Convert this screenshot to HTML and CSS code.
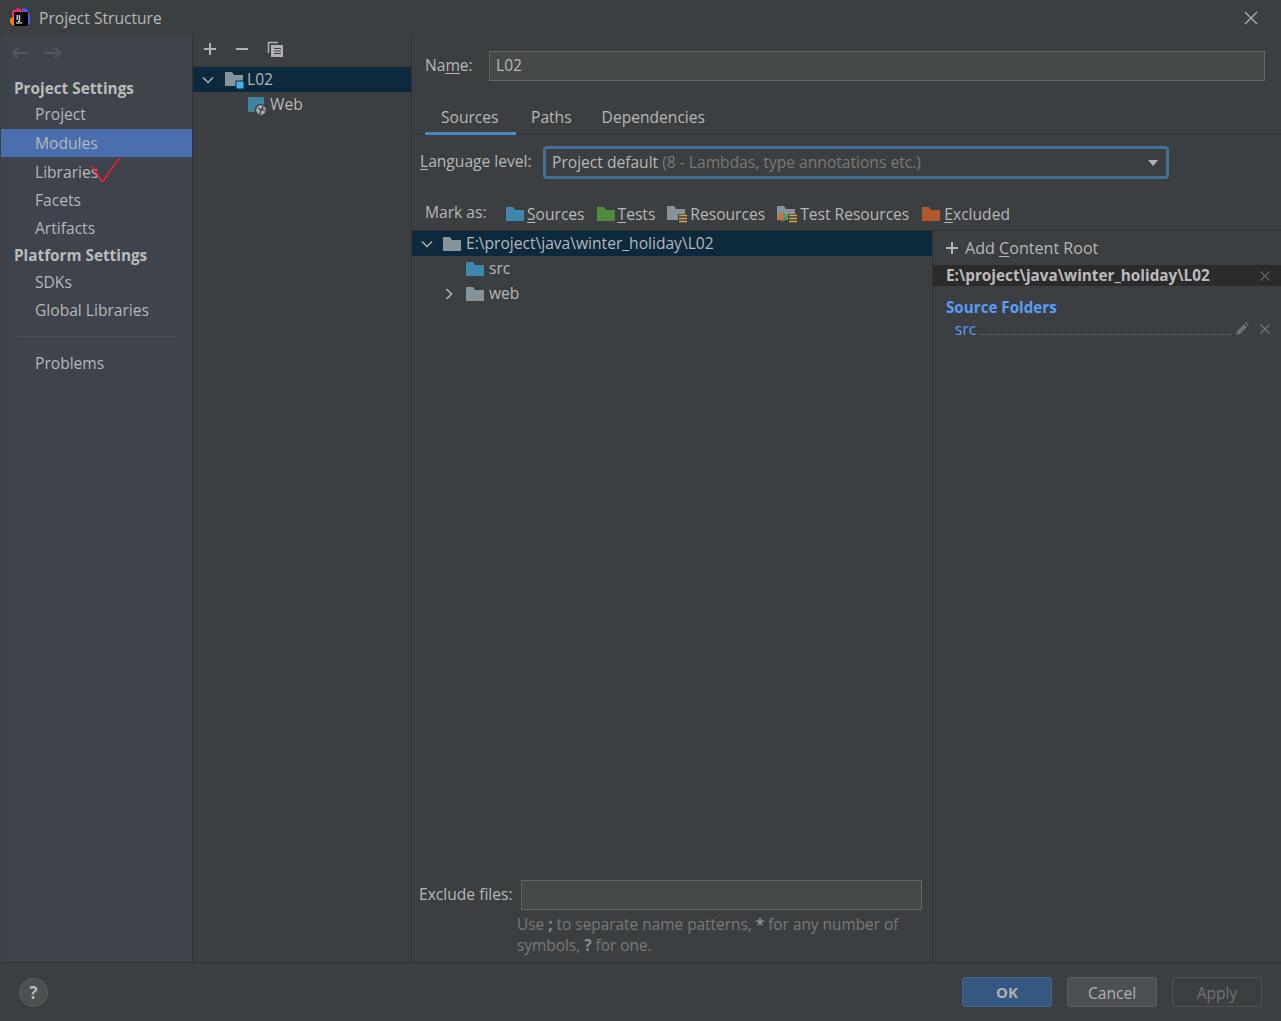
FILE: index.html
```html
<!DOCTYPE html>
<html lang="en">

<head>
  <title>Project Structure</title>
  <meta charset="UTF-8">
  <link rel="stylesheet" href="styles.css">
</head>

<body>

<div class="window">
  <div class="titlebar">
    <svg class="app-logo" width="22" height="22" viewBox="0 0 22 22">
      <path d="M3 4 L10 1 L14 5 L5 5 L5 11 L3 9 Z" fill="#f5296b"/>
      <path d="M13 1 L18 2 L21 8 L21 16 L17 20 L19 16 L19 5 L13 5 Z" fill="#3f5fe0"/>
      <path d="M1 12 L5 9 L5 19 L3 18 L1 15 Z" fill="#f97a12"/>
      <rect x="5" y="5" width="14" height="14" fill="#000"/>
      <text x="7" y="12.500" class="logo-text">IJ</text>
      <rect x="7" y="15.500" width="6" height="1" fill="#fff"/>
    </svg>
    <span class="title">Project Structure</span>
    <svg class="close" width="14" height="14" viewBox="0 0 14 14"><path d="M1 1 L13 13 M13 1 L1 13" stroke="#afb1b3" stroke-width="1.2"/></svg>
  </div>

  <div class="main">
    <div class="sidebar">
      <div class="nav-arrows">
        <svg width="18" height="14" viewBox="0 0 18 14"><path d="M17 7 H2 M7 2 L2 7 L7 12" fill="none" stroke="#55585a" stroke-width="2"/></svg>
        <svg width="18" height="14" viewBox="0 0 18 14"><path d="M1 7 H16 M11 2 L16 7 L11 12" fill="none" stroke="#55585a" stroke-width="2"/></svg>
      </div>
      <div class="heading first">Project Settings</div>
      <div class="item">Project</div>
      <div class="item active">Modules</div>
      <div class="item checked">Libraries
        <svg class="check" width="32" height="28" viewBox="0 0 32 28"><path d="M1 9 C4 13 7 19 10 23 C11 25 12 25 13 23 C17 16 23 8 29 1" fill="none" stroke="#f01f2a" stroke-width="1.600"/></svg>
      </div>
      <div class="item">Facets</div>
      <div class="item">Artifacts</div>
      <div class="heading">Platform Settings</div>
      <div class="item">SDKs</div>
      <div class="item">Global Libraries</div>
      <div class="side-sep"></div>
      <div class="item">Problems</div>
    </div>

    <div class="modules">
      <div class="mod-toolbar">
        <svg width="14" height="14" viewBox="0 0 14 14"><path d="M7 1 V13 M1 7 H13" stroke="#afb1b3" stroke-width="2"/></svg>
        <svg width="14" height="14" viewBox="0 0 14 14"><path d="M1 7 H13" stroke="#afb1b3" stroke-width="2"/></svg>
        <svg width="17" height="17" viewBox="0 0 17 17"><path d="M1.500 12 V1.500 H11" fill="none" stroke="#afb1b3" stroke-width="1.500"/><rect x="4" y="4" width="12" height="12" fill="#afb1b3"/><path d="M7 7.500 H14 M7 10 H14 M7 12.500 H14" stroke="#3c3f41"/></svg>
      </div>
      <div class="mod-row selected">
        <svg class="chevron" width="12" height="12" viewBox="0 0 12 12"><path d="M1 3.500 L6 8.500 L11 3.500" fill="none" stroke="#afb1b3" stroke-width="1.500"/></svg>
        <svg class="mod-icon" width="20" height="17" viewBox="0 0 20 17"><path d="M0 0 H7 L9 3 H18 V14 H0 Z" fill="#87939a"/><rect x="11" y="9" width="8" height="8" fill="#3db5e6" stroke="#0d293e"/></svg>
        <span>L02</span>
      </div>
      <div class="mod-row web">
        <svg class="web-icon" width="19" height="19" viewBox="0 0 19 19"><rect x="0" y="0" width="16" height="15" fill="#40829f"/><circle cx="13" cy="13" r="5.500" fill="#afb1b3" stroke="#3c3f41" stroke-width="1.500"/><path d="M10 11 L13 13 L12 17 M15 9 L14 12 L17 14" stroke="#3c3f41" fill="none" stroke-width="1.500"/></svg>
        <span>Web</span>
      </div>
    </div>

    <div class="content">
      <div class="name-row">
        <label>Na<u>m</u>e:</label>
        <div class="field name-field">L02</div>
      </div>
      <div class="tabs">
        <div class="tab current">Sources</div>
        <div class="tab">Paths</div>
        <div class="tab">Dependencies</div>
      </div>
      <div class="lang-row">
        <label><u>L</u>anguage level:</label>
        <div class="combo">
          <span class="combo-text">Project default <span class="muted">(8 - Lambdas, type annotations etc.)</span></span>
          <span class="arrow"></span>
        </div>
      </div>
      <div class="mark-row">
        <label>Mark as:</label>
        <span class="mark first-mark">
          <svg width="18" height="14" viewBox="0 0 18 14"><path d="M0 0 H7 L9 3 H18 V14 H0 Z" fill="#3f88ad"/></svg>
          <span><u>S</u>ources</span>
        </span>
        <span class="mark">
          <svg width="18" height="14" viewBox="0 0 18 14"><path d="M0 0 H7 L9 3 H18 V14 H0 Z" fill="#4f8a3f"/></svg>
          <span><u>T</u>ests</span>
        </span>
        <span class="mark">
          <svg width="20" height="17" viewBox="0 0 20 17"><path d="M0 0 H7 L9 3 H18 V14 H0 Z" fill="#87939a"/><rect x="11" y="8" width="9" height="9" fill="#3c3f41"/><path d="M12 9.500 H20 M12 12.500 H20 M12 15.500 H20" stroke="#d9a343" stroke-width="1.500"/></svg>
          <span>Resources</span>
        </span>
        <span class="mark">
          <svg width="20" height="17" viewBox="0 0 20 17"><path d="M0 0 H7 L9 3 H18 V14 H0 Z" fill="#87939a"/><path d="M5 6 L0 11 L5 16 Z" fill="#e8602a"/><path d="M6 6 L11 11 L6 16 Z" fill="#4f9a3f"/><rect x="11" y="8" width="9" height="9" fill="#3c3f41"/><path d="M12 9.500 H20 M12 12.500 H20 M12 15.500 H20" stroke="#d9a343" stroke-width="1.500"/></svg>
          <span>Test Resources</span>
        </span>
        <span class="mark">
          <svg width="18" height="14" viewBox="0 0 18 14"><path d="M0 0 H7 L9 3 H18 V14 H0 Z" fill="#b0592b"/></svg>
          <span><u>E</u>xcluded</span>
        </span>
      </div>

      <div class="split">
        <div class="left-pane">
          <div class="tree">
            <div class="tree-row selected">
              <svg class="chevron" width="12" height="12" viewBox="0 0 12 12"><path d="M1 3.500 L6 8.500 L11 3.500" fill="none" stroke="#afb1b3" stroke-width="1.500"/></svg>
              <svg width="18" height="14" viewBox="0 0 18 14"><path d="M0 0 H7 L9 3 H18 V14 H0 Z" fill="#87939a"/></svg>
              <span>E:\project\java\winter_holiday\L02</span>
            </div>
            <div class="tree-row child">
              <svg width="18" height="14" viewBox="0 0 18 14"><path d="M0 0 H7 L9 3 H18 V14 H0 Z" fill="#3f88ad"/></svg>
              <span>src</span>
            </div>
            <div class="tree-row child collapsed">
              <svg class="chevron-right" width="12" height="12" viewBox="0 0 12 12"><path d="M3.500 1 L8.500 6 L3.500 11" fill="none" stroke="#afb1b3" stroke-width="1.500"/></svg>
              <svg width="18" height="14" viewBox="0 0 18 14"><path d="M0 0 H7 L9 3 H18 V14 H0 Z" fill="#87939a"/></svg>
              <span>web</span>
            </div>
          </div>
          <div class="exclude-row">
            <label>Exclude files:</label>
            <div class="field exclude-field"></div>
          </div>
          <p class="hint">Use<b>;</b>to separate name patterns,<b>*</b>for any number of symbols,<b>?</b>for one.</p>
        </div>

        <div class="right-pane">
          <div class="add-root">
            <svg width="14" height="14" viewBox="0 0 14 14"><path d="M7 1 V13 M1 7 H13" stroke="#afb1b3" stroke-width="2"/></svg>
            <span>Add <u>C</u>ontent Root</span>
          </div>
          <div class="root-row">
            <span>E:\project\java\winter_holiday\L02</span>
            <svg width="10" height="10" viewBox="0 0 10 10"><path d="M0.500 0.500 L9.500 9.500 M9.500 0.500 L0.500 9.500" stroke="#5f6264" stroke-width="1.200"/></svg>
          </div>
          <div class="folders-title">Source Folders</div>
          <div class="folder-row">
            <span class="folder-name">src</span>
            <span class="dots"></span>
            <svg width="14" height="14" viewBox="0 0 14 14"><path d="M1 13 L2 9 L9 2 L12 5 L5 12 Z M10 1 L11 0 L14 3 L13 4 Z" fill="#6e7173"/></svg>
            <svg width="10" height="10" viewBox="0 0 10 10"><path d="M0.500 0.500 L9.500 9.500 M9.500 0.500 L0.500 9.500" stroke="#6e7173" stroke-width="1.200"/></svg>
          </div>
        </div>
      </div>
    </div>
  </div>

  <div class="footer">
    <div class="help">?</div>
    <div class="buttons">
      <button class="btn ok">OK</button>
      <button class="btn">Cancel</button>
      <button class="btn off">Apply</button>
    </div>
  </div>
</div>

</body>

</html>
```

FILE: styles.css
```css
* {
  box-sizing: border-box;
}

body {
  margin: 0;
  background: #3c3f41;
  color: #b5b7b9;
  font-family: "Open Sans", "Noto Sans", sans-serif;
  font-size: 15.600px;
}

u {
  text-underline-offset: 2px;
}

label {
  white-space: nowrap;
}

.window {
  width: 1281px;
  height: 1021px;
  display: flex;
  flex-direction: column;
  overflow: hidden;
}

.titlebar {
  height: 35px;
  padding: 0 23px 0 9px;
  display: flex;
  align-items: center;
  flex-shrink: 0;
}

.app-logo {
  margin-right: 8px;
}

.logo-text {
  font-size: 7px;
  font-weight: 700;
  fill: #fff;
}

.title {
  flex: 1;
}

.main {
  height: 928px;
  display: flex;
  border-bottom: 1px solid #323232;
}

.sidebar {
  width: 192px;
  margin-left: 1px;
  background: #3e434c;
  border-right: 1px solid #323232;
  flex-shrink: 0;
}

.nav-arrows {
  height: 37px;
  padding: 11px 0 0 10px;
  display: flex;
  gap: 15px;
}

.heading {
  height: 25px;
  line-height: 24px;
  padding-left: 13px;
  font-size: 15.300px;
  font-weight: 700;
  color: #bbbbbb;
}

.heading.first {
  height: 28px;
  line-height: 32px;
}

.item {
  position: relative;
  height: 28.500px;
  line-height: 29px;
  padding-left: 34px;
}

.item.active {
  background: #4b6eaf;
}

.item.checked {
  line-height: 30px;
}

.check {
  position: absolute;
  left: 90px;
  top: 0;
}

.side-sep {
  height: 1px;
  margin: 11px 16px 12px 16px;
  background: #4c5057;
}

.modules {
  width: 219px;
  border-right: 1px solid #323232;
  flex-shrink: 0;
}

.mod-toolbar {
  height: 31px;
  padding: 0 0 2px 10px;
  display: flex;
  align-items: center;
  gap: 18px;
  border-bottom: 1px solid #323232;
  margin-bottom: 1px;
}

.mod-row {
  height: 25px;
  display: flex;
  align-items: center;
  padding-left: 9px;
}

.mod-row span {
  padding-bottom: 2px;
}

.mod-row.selected,
.tree-row.selected {
  background: #0d293e;
}

.mod-row .chevron {
  margin-right: 11px;
}

.mod-icon {
  margin-right: 2px;
  margin-top: 2px;
}

.mod-row.web {
  padding-left: 55px;
  gap: 3px;
}

.web-icon {
  margin-top: 4px;
}

.content {
  flex: 1;
  display: flex;
  flex-direction: column;
  min-width: 0;
}

.name-row {
  height: 61px;
  padding: 16px 16px 0 13px;
  display: flex;
  gap: 17px;
}

.name-row label {
  width: 47px;
  line-height: 29px;
}

.field {
  background: #45494a;
  border: 1px solid #646464;
  height: 30px;
  line-height: 26px;
  padding-left: 6px;
}

.name-field {
  flex: 1;
}

.tabs {
  height: 39px;
  padding-left: 13px;
  display: flex;
  border-bottom: 1px solid #323232;
}

.tab {
  padding: 0 15px;
  height: 39px;
  line-height: 43px;
}

.tab.current {
  width: 91px;
  padding-left: 16px;
  border-bottom: 3px solid #4a88c7;
}

.lang-row {
  height: 55px;
  padding: 11px 0 0 8px;
  display: flex;
}

.lang-row label {
  width: 123px;
  line-height: 31px;
}

.combo {
  width: 626px;
  height: 33px;
  padding: 0 8px 0 6px;
  display: flex;
  align-items: center;
  justify-content: space-between;
  border: 3px solid #466d94;
  border-radius: 4px;
  background: #3c3f41;
}

.combo-text {
  padding-bottom: 2px;
}

.muted {
  color: #787878;
}

.arrow {
  width: 0;
  height: 0;
  border-left: 5px solid transparent;
  border-right: 5px solid transparent;
  border-top: 6px solid #afb1b3;
}

.mark-row {
  height: 41px;
  padding: 11px 0 0 13px;
  display: flex;
  align-items: flex-start;
  border-bottom: 1px solid #323232;
}

.mark-row label {
  width: 60px;
}

.mark {
  display: flex;
  align-items: center;
  gap: 3px;
  margin-left: 12px;
  padding-top: 2px;
}

.mark:last-child {
  margin-left: 13px;
  gap: 4px;
}

.mark.first-mark {
  margin-left: 21px;
}

.split {
  flex: 1;
  display: flex;
  min-height: 0;
}

.left-pane {
  width: 521px;
  display: flex;
  flex-direction: column;
  border-right: 1px solid #323232;
}

.tree {
  flex: 1;
}

.tree-row {
  height: 25px;
  display: flex;
  align-items: center;
  gap: 5px;
  padding-left: 30px;
}

.tree-row span {
  padding-bottom: 2px;
}

.tree-row.selected {
  padding-left: 9px;
}

.tree-row.selected .chevron {
  margin-right: 5px;
}

.tree-row.child {
  padding-left: 54px;
}

.tree-row.collapsed {
  padding-left: 31px;
}

.chevron-right {
  margin-right: 6px;
}

.exclude-row {
  padding: 0 10px 0 7px;
  display: flex;
  gap: 8px;
}

.exclude-row label {
  line-height: 28px;
}

.exclude-field {
  flex: 1;
}

.hint {
  margin: 4px 20px 6px 105px;
  line-height: 21px;
  font-size: 15.400px;
  color: #787878;
}

.hint b {
  margin: 0 4px;
  color: #8a8d8f;
}

.right-pane {
  flex: 1;
  min-width: 0;
}

.add-root {
  height: 34px;
  padding: 0 0 0 12px;
  display: flex;
  align-items: center;
  gap: 6px;
  font-size: 16.100px;
}

.root-row {
  height: 21px;
  padding: 0 11px 0 13px;
  display: flex;
  align-items: center;
  justify-content: space-between;
  background: #2b2b2b;
  font-size: 15.300px;
  font-weight: 700;
  color: #bbbbbb;
}

.root-row span {
  padding-bottom: 2px;
}

.folders-title {
  margin-top: 10px;
  padding-left: 13px;
  line-height: 22px;
  color: #589df6;
  font-size: 15.200px;
  font-weight: 700;
}

.folder-row {
  height: 22px;
  padding: 0 11px 0 22px;
  display: flex;
  align-items: center;
  gap: 3px;
}

.folder-name {
  color: #589df6;
}

.dots {
  flex: 1;
  margin-top: 10px;
  border-bottom: 1px dotted #6e7173;
}

.folder-row svg:last-child {
  margin-left: 8px;
}

.footer {
  height: 57px;
  padding: 0 19px 0 19px;
  display: flex;
  align-items: center;
  justify-content: space-between;
}

.help {
  width: 29px;
  height: 29px;
  margin-top: 2px;
  line-height: 27px;
  text-align: center;
  border-radius: 50%;
  background: #4d5052;
  border: 1px solid #5c5f61;
  font-size: 17px;
  font-weight: 700;
}

.buttons {
  display: flex;
  gap: 15px;
}

.btn {
  width: 90px;
  height: 30px;
  padding-top: 3px;
  border: 1px solid #5e6060;
  border-radius: 3px;
  background: #4c5052;
  color: #afb1b3;
  font-family: inherit;
  font-size: 15.600px;
}

.btn.ok {
  padding-top: 2px;
  background: #365880;
  border-color: #43688c;
  font-size: 15px;
  font-weight: 700;
}

.btn.off {
  background: transparent;
  border-color: #505355;
  color: #6f7173;
}
```
